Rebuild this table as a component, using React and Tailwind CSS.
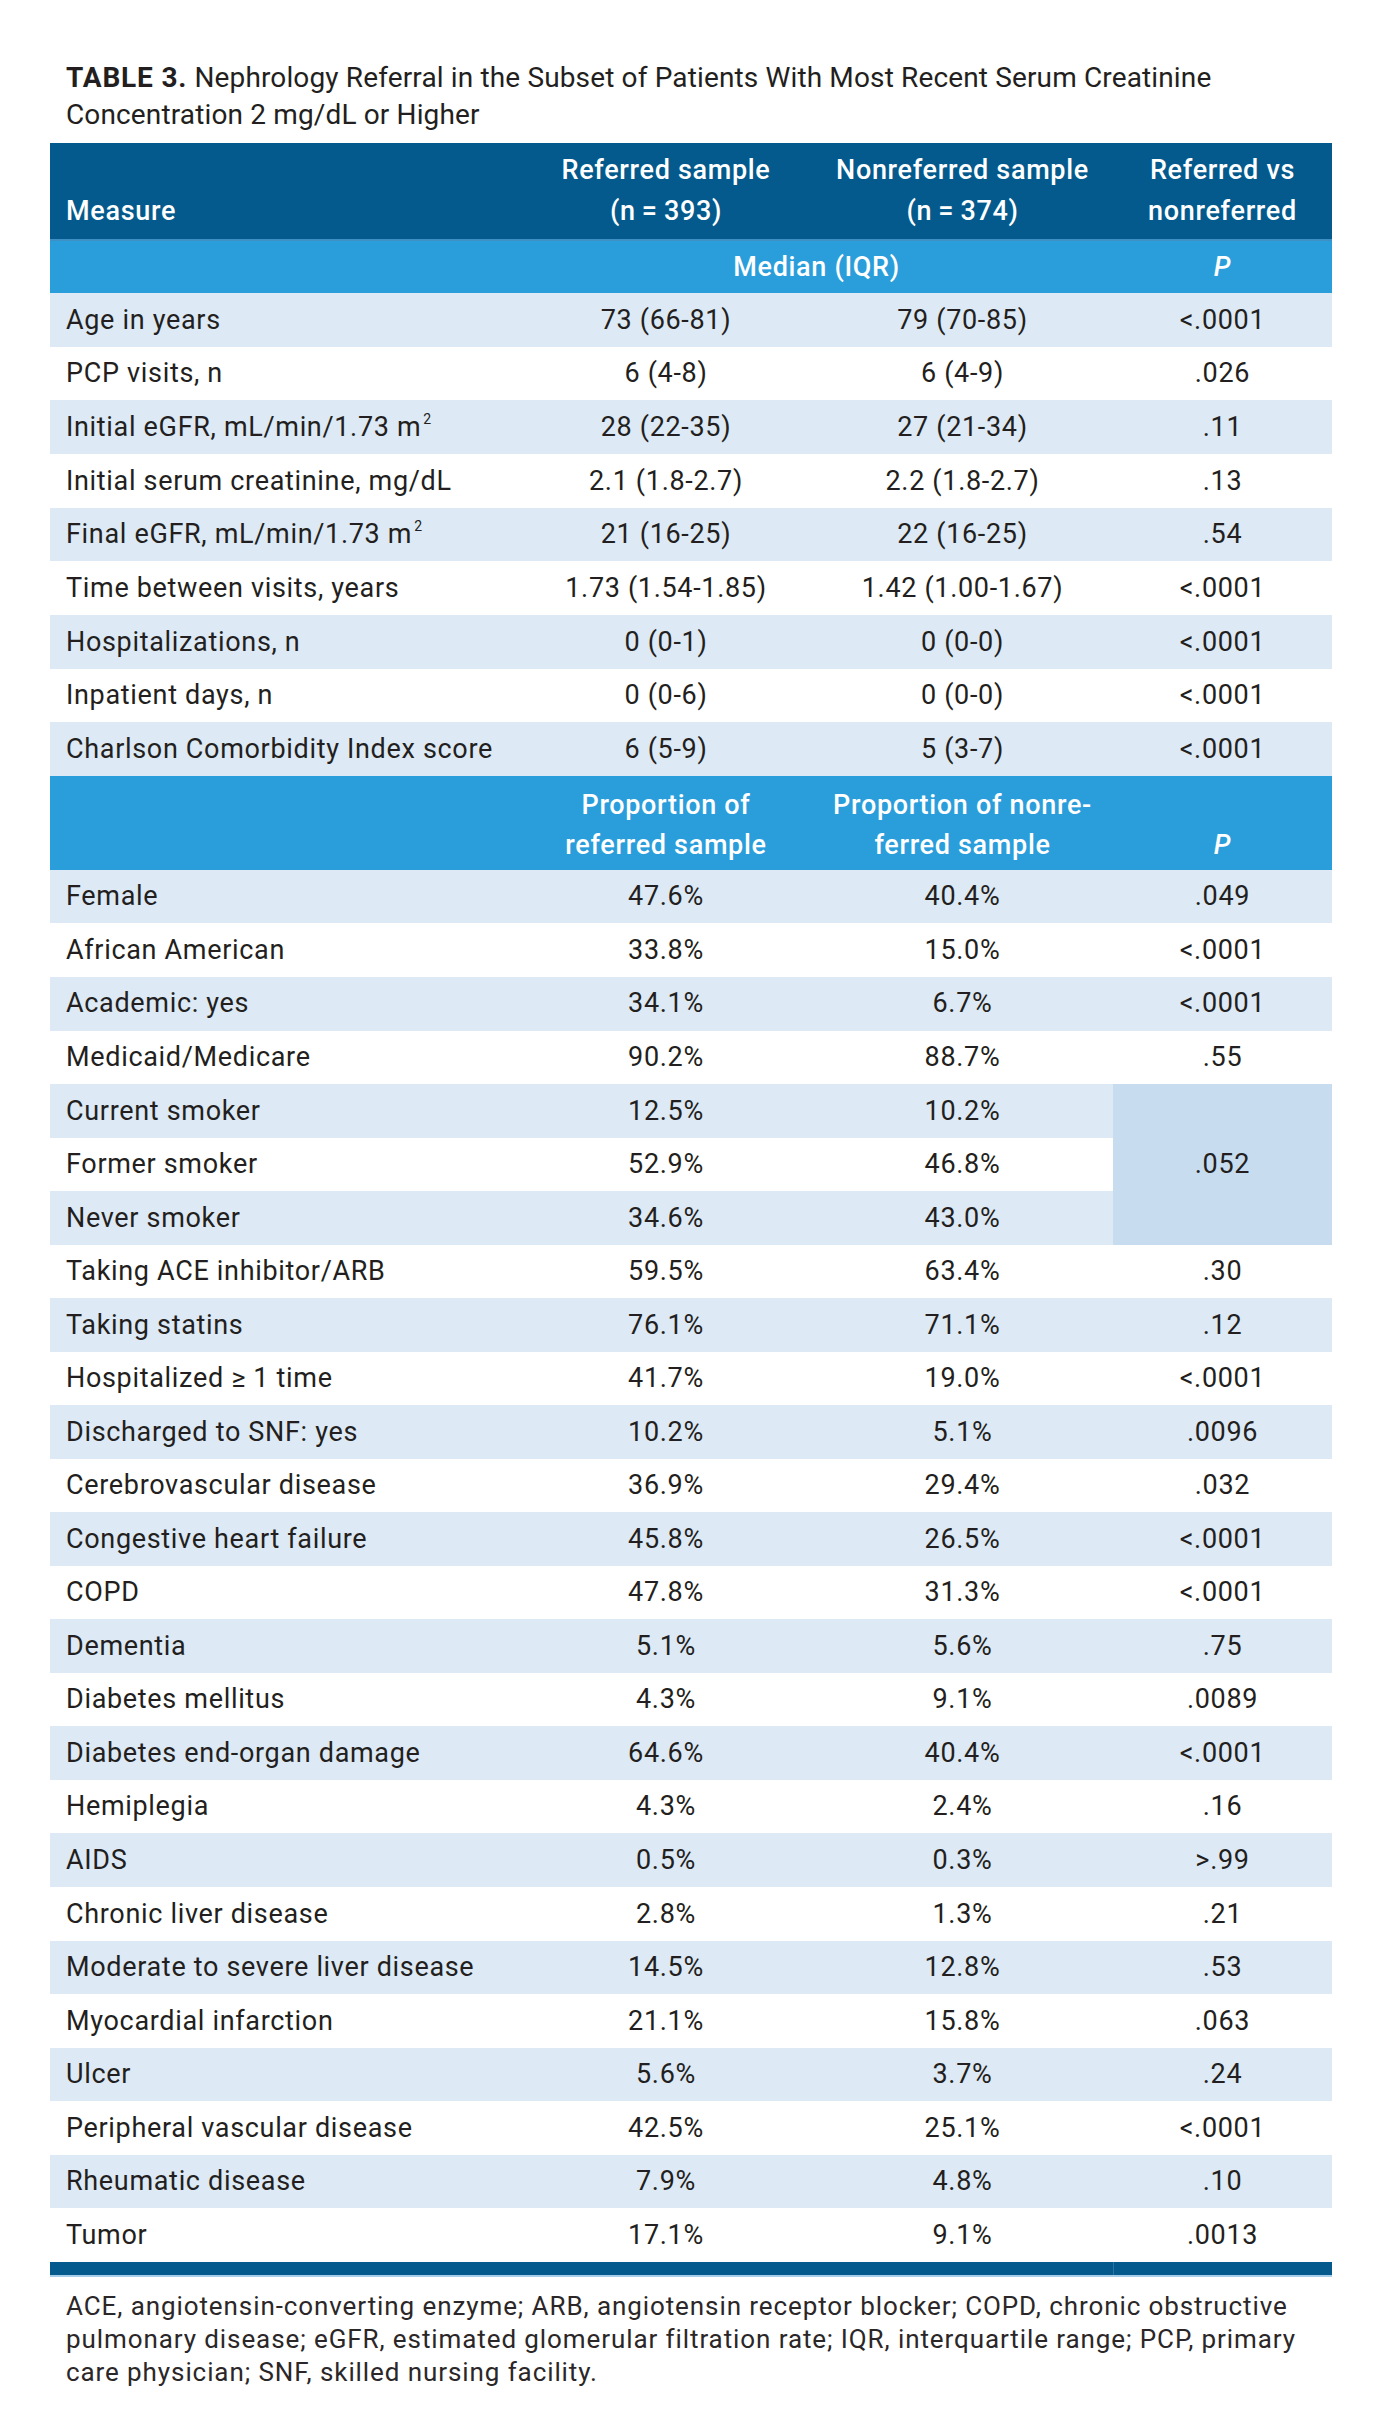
import React from "react";

const medianRows = [
  ["Age in years", "73 (66-81)", "79 (70-85)", "<.0001"],
  ["PCP visits, n", "6 (4-8)", "6 (4-9)", ".026"],
  ["Initial eGFR, mL/min/1.73 m", "28 (22-35)", "27 (21-34)", ".11", true],
  ["Initial serum creatinine, mg/dL", "2.1 (1.8-2.7)", "2.2 (1.8-2.7)", ".13"],
  ["Final eGFR, mL/min/1.73 m", "21 (16-25)", "22 (16-25)", ".54", true],
  ["Time between visits, years", "1.73 (1.54-1.85)", "1.42 (1.00-1.67)", "<.0001"],
  ["Hospitalizations, n", "0 (0-1)", "0 (0-0)", "<.0001"],
  ["Inpatient days, n", "0 (0-6)", "0 (0-0)", "<.0001"],
  ["Charlson Comorbidity Index score", "6 (5-9)", "5 (3-7)", "<.0001"],
];

// smoking rows share one P cell (rowSpan)
const proportionRows = [
  ["Female", "47.6%", "40.4%", ".049"],
  ["African American", "33.8%", "15.0%", "<.0001"],
  ["Academic: yes", "34.1%", "6.7%", "<.0001"],
  ["Medicaid/Medicare", "90.2%", "88.7%", ".55"],
  ["Current smoker", "12.5%", "10.2%", "span"],
  ["Former smoker", "52.9%", "46.8%", null],
  ["Never smoker", "34.6%", "43.0%", null],
  ["Taking ACE inhibitor/ARB", "59.5%", "63.4%", ".30"],
  ["Taking statins", "76.1%", "71.1%", ".12"],
  ["Hospitalized \u2265 1 time", "41.7%", "19.0%", "<.0001"],
  ["Discharged to SNF: yes", "10.2%", "5.1%", ".0096"],
  ["Cerebrovascular disease", "36.9%", "29.4%", ".032"],
  ["Congestive heart failure", "45.8%", "26.5%", "<.0001"],
  ["COPD", "47.8%", "31.3%", "<.0001"],
  ["Dementia", "5.1%", "5.6%", ".75"],
  ["Diabetes mellitus", "4.3%", "9.1%", ".0089"],
  ["Diabetes end-organ damage", "64.6%", "40.4%", "<.0001"],
  ["Hemiplegia", "4.3%", "2.4%", ".16"],
  ["AIDS", "0.5%", "0.3%", ">.99"],
  ["Chronic liver disease", "2.8%", "1.3%", ".21"],
  ["Moderate to severe liver disease", "14.5%", "12.8%", ".53"],
  ["Myocardial infarction", "21.1%", "15.8%", ".063"],
  ["Ulcer", "5.6%", "3.7%", ".24"],
  ["Peripheral vascular disease", "42.5%", "25.1%", "<.0001"],
  ["Rheumatic disease", "7.9%", "4.8%", ".10"],
  ["Tumor", "17.1%", "9.1%", ".0013"],
];

const DataRow = ({ row, index, height }) => {
  const [label, a, b, p, sup] = row;
  const shaded = index % 2 === 0;
  return (
    <tr className={`${height} ${shaded ? "bg-[#dde9f5]" : "bg-white"}`}>
      <td className="pl-4 text-left">
        {label}
        {sup && <sup className="text-[14px] relative -top-[12px] ml-[2px]">2</sup>}
      </td>
      <td className="text-center">{a}</td>
      <td className="text-center">{b}</td>
      {p === "span" ? (
        <td rowSpan={3} className="text-center align-middle bg-[#c8dcf0]">
          .052
        </td>
      ) : p !== null ? (
        <td className="text-center">{p}</td>
      ) : null}
    </tr>
  );
};

export default function App() {
  return (
    <div
      className="w-[1383px] min-h-[2431px] bg-white px-[50px] pt-[59px] text-[#231f20]"
      style={{ fontFamily: "Roboto, 'Liberation Sans', sans-serif" }}
    >
      {/* Caption */}
      <p className="pl-4 pr-2 text-[28px] leading-[37px] tracking-[0.005em] mb-[10px]">
        <span className="font-bold tracking-[0.03em]">TABLE 3.</span> Nephrology Referral in the
        Subset of Patients With Most Recent Serum Creatinine Concentration 2 mg/dL or Higher
      </p>

      <table className="w-[1282px] table-fixed border-collapse text-[27px] tracking-[0.025em]">
        <colgroup>
          <col className="w-[470px]" />
          <col className="w-[292px]" />
          <col className="w-[301px]" />
          <col className="w-[219px]" />
        </colgroup>
        <thead>
          <tr className="h-[97px] bg-[#045a8c] text-white font-medium leading-[41px]">
            <th className="pl-4 text-left align-bottom pb-[7px] font-medium">Measure</th>
            <th className="text-center align-bottom pb-[7px] font-medium">
              Referred sample
              <br />
              (n{"\u2009=\u2009"}393)
            </th>
            <th className="text-center align-bottom pb-[7px] font-medium">
              Nonreferred sample
              <br />
              (n{"\u2009=\u2009"}374)
            </th>
            <th className="text-center align-bottom pb-[7px] font-medium">
              Referred vs
              <br />
              nonreferred
            </th>
          </tr>
          <tr className="h-[53px] bg-[#2a9edb] text-white border-t-2 border-[#3d8fc4]">
            <th />
            <th colSpan={2} className="text-center font-medium">
              Median (IQR)
            </th>
            <th className="text-center font-medium italic">P</th>
          </tr>
        </thead>
        <tbody>
          {medianRows.map((row, i) => (
            <DataRow key={row[0]} row={row} index={i} height="h-[53.67px]" />
          ))}
          <tr className="h-[94px] bg-[#2a9edb] text-white font-medium leading-[40px]">
            <td />
            <td className="text-center align-bottom pb-[5px]">
              Proportion of
              <br />
              referred sample
            </td>
            <td className="text-center align-bottom pb-[5px]">
              Proportion of nonre-
              <br />
              ferred sample
            </td>
            <td className="text-center align-bottom pb-[5px] italic">P</td>
          </tr>
          {proportionRows.map((row, i) => (
            <DataRow key={row[0]} row={row} index={i} height="h-[53.54px]" />
          ))}
        </tbody>
        <tfoot>
          <tr className="h-[14px] bg-[#045a8c] border-b-2 border-[#a6cdea]">
            <td />
            <td />
            <td />
            <td className="border-l border-[#2f73a0]" />
          </tr>
        </tfoot>
      </table>

      {/* Footnote */}
      <p className="pl-4 pr-[20px] mt-[13px] text-[26px] leading-[33px] tracking-[0.035em] text-[#2b2728]">
        ACE, angiotensin-converting enzyme; ARB, angiotensin receptor blocker; COPD, chronic
        obstructive pulmonary disease; eGFR, estimated glomerular filtration rate; IQR,
        interquartile range; PCP, primary care physician; SNF, skilled nursing facility.
      </p>
    </div>
  );
}
